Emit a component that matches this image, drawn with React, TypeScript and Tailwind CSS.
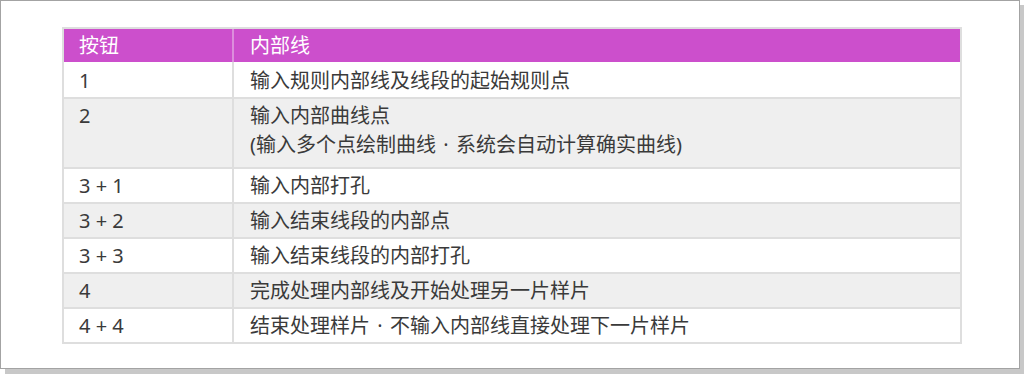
const Dot = () => <span className="inline-block w-[20px] text-center">·</span>;

const rows: { key: string; lines: React.ReactNode[] }[] = [
  { key: '1', lines: ['输入规则内部线及线段的起始规则点'] },
  {
    key: '2',
    lines: [
      '输入内部曲线点',
      <>
        (输入多个点绘制曲线<Dot />系统会自动计算确实曲线)
      </>,
    ],
  },
  { key: '3 + 1', lines: ['输入内部打孔'] },
  { key: '3 + 2', lines: ['输入结束线段的内部点'] },
  { key: '3 + 3', lines: ['输入结束线段的内部打孔'] },
  { key: '4', lines: ['完成处理内部线及开始处理另一片样片'] },
  {
    key: '4 + 4',
    lines: [
      <>
        结束处理样片<Dot />不输入内部线直接处理下一片样片
      </>,
    ],
  },
];

export default function App() {
  return (
    <div className="w-[1024px] h-[374px] bg-white" style={{ fontFamily: '"Noto Sans", "Noto Sans CJK SC", sans-serif' }}>
      <div className="w-[1020px] h-[369px] border border-[#a3a3a3] bg-white shadow-[5px_5px_0_0_#c8c8c8] pt-[26px] pl-[61px]">
        <div className="w-[900px] border-2 border-[#dedede] text-[20px] text-[#3a3a3a]">
          {/* Header */}
          <div className="flex h-[33px] bg-[#cc4fcc] text-white leading-[28px]">
            <div className="w-[168px] pl-[15px] pt-[3px]">按钮</div>
            <div className="w-[2px] bg-[#dc8edc]" />
            <div className="flex-1 pl-4 pt-[3px]">内部线</div>
          </div>

          {/* Body */}
          {rows.map((row, i) => (
            <div
              key={row.key}
              className={
                'flex ' +
                (i === 0 ? '' : 'border-t-2 border-[#dedede] ') +
                (i % 2 === 1 ? 'bg-[#efefef] ' : 'bg-white ') +
                (i === 1 ? 'h-[70px]' : 'h-[35px]')
              }
            >
              <div className={'w-[168px] pl-[15px] leading-[29px] ' + (i === 0 ? 'pt-[4px]' : 'pt-[2px]')}>{row.key}</div>
              <div className="w-[2px] bg-[#dedede]" />
              <div className={'flex-1 pl-4 leading-[29px] ' + (i === 0 ? 'pt-[4px]' : 'pt-[2px]')}>
                {row.lines.map((l, j) => (
                  <div key={j}>{l}</div>
                ))}
              </div>
            </div>
          ))}
        </div>
      </div>
    </div>
  );
}
